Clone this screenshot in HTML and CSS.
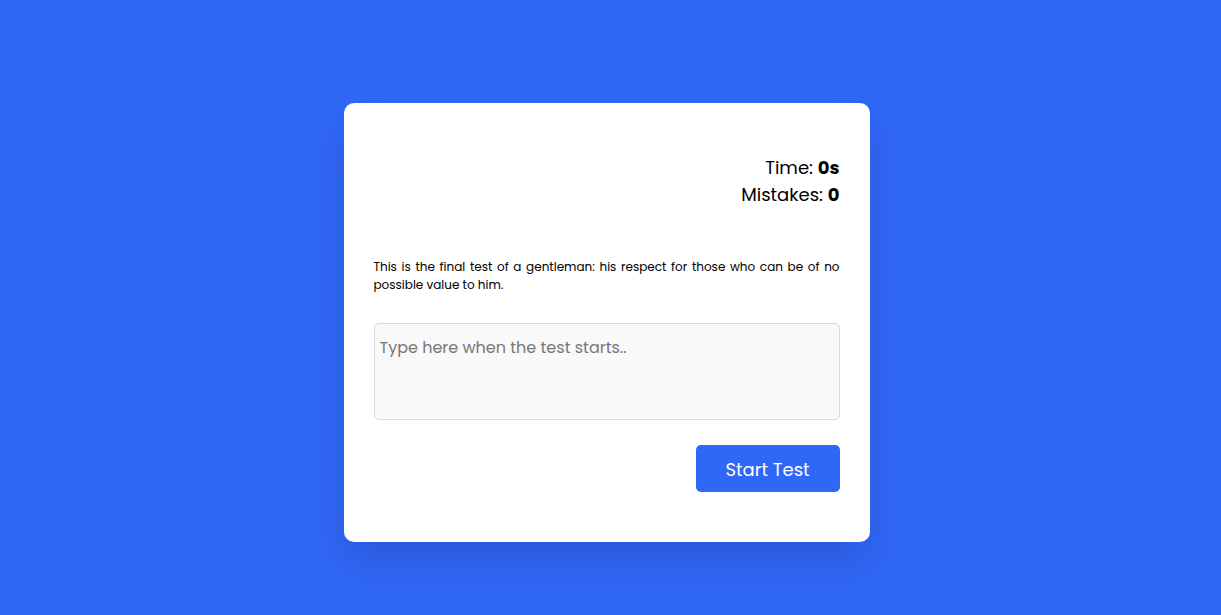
FILE: index.html
```html
<!DOCTYPE html>
<html lang="en">
<head>
<meta charset="utf-8">
<title>Typing Test</title>
<link rel="stylesheet" href="styles.css">
</head>
<body>
<main class="page">
  <section class="card">
    <div class="stats">
      <p class="stat">Time: <span class="stat-value">0s</span></p>
      <p class="stat">Mistakes: <span class="stat-value">0</span></p>
    </div>
    <p class="quote">This is the final test of a gentleman: his respect for those who can be of no possible value to him.</p>
    <textarea class="input" placeholder="Type here when the test starts.."></textarea>
    <div class="actions">
      <button class="start-btn" type="button">Start Test</button>
    </div>
  </section>
</main>
</body>
</html>
```
FILE: styles.css
```css
* { box-sizing: border-box; }
html, body { margin: 0; padding: 0; }
body {
  background: #3067f7;
  font-family: "Poppins", "Inter", "Noto Sans", sans-serif;
  color: #000;
  height: 615px;
}
.page {
  display: flex;
  justify-content: center;
  padding: 103px 8px 0 0;
}
.card {
  width: 526px;
  height: 439px;
  background: #fff;
  border-radius: 10px;
  padding: 51px 30px 50px 30px;
  box-shadow: 0 20px 40px rgba(0, 0, 0, 0.12);
  display: flex;
  flex-direction: column;
}
.stats {
  text-align: right;
}
.stat {
  margin: 0;
  font-size: 18px;
  line-height: 27px;
}
.stat-value { font-weight: 700; }
.quote {
  margin: 50px 0 0 0;
  font-size: 12px;
  line-height: 18px;
  text-align: justify;
}
.input {
  margin-top: 29px;
  width: 466px;
  height: 97px;
  border: 1px solid #d9d9d9;
  border-radius: 5px;
  background: #f9f9f9;
  font-family: inherit;
  font-size: 16px;
  padding: 11px 5px;
  resize: none;
  outline: none;
}
.input::placeholder { color: #777; }
.actions {
  margin-top: 25px;
  display: flex;
  justify-content: flex-end;
}
.start-btn {
  width: 144px;
  height: 47px;
  padding-top: 2px;
  border: none;
  border-radius: 5px;
  background: #3067f7;
  color: #fff;
  font-family: inherit;
  font-size: 18px;
  cursor: pointer;
}
```
